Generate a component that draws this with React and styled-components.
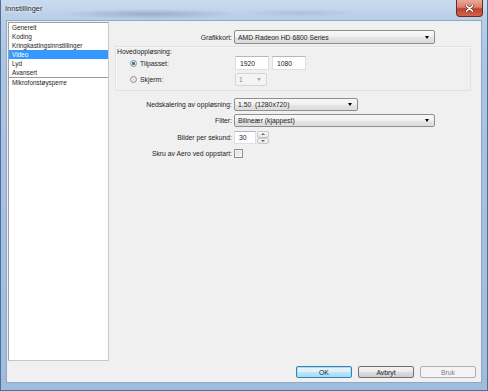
import React from 'react';
import styled, { createGlobalStyle, css } from 'styled-components';

const GlobalStyle = createGlobalStyle`
  html, body { margin: 0; padding: 0; }
  body {
    width: 488px;
    height: 391px;
    overflow: hidden;
    font-family: "Liberation Sans", Arial, sans-serif;
    font-size: 6.8px;
    color: #1e1e1e;
  }
`;

const Window = styled.div`
  width: 488px;
  height: 391px;
  box-sizing: border-box;
  display: flex;
  flex-direction: column;
  padding: 0 5px 7px 5px;
  border: 1px solid #4d6f98;
  border-top: none;
  background:
    radial-gradient(ellipse 90px 5px at 150px 14px, rgba(70, 90, 120, 0.3), transparent),
    radial-gradient(ellipse 60px 4px at 300px 13px, rgba(90, 110, 140, 0.18), transparent),
    linear-gradient(180deg, #c9dbef 0px, #b9cfe8 18px, #abc5e2 60px, #9fbcdd 100%);
`;

const TitleBar = styled.div`
  height: 20px;
  display: flex;
  align-items: flex-start;
  justify-content: space-between;
`;

const Title = styled.span`
  margin: 4px 0 0 -1px;
  font-size: 7.4px;
  color: #1a1a1a;
  text-shadow: 0 0 3px #fff, 0 0 3px #fff;
`;

const CloseButton = styled.div`
  width: 27px;
  height: 17px;
  margin-right: -1px;
  box-sizing: border-box;
  border: 1px solid #6b2a22;
  border-top: none;
  border-radius: 0 0 4px 4px;
  background: linear-gradient(180deg, #e9a99a 0%, #d9826f 45%, #c4402a 55%, #d3634c 100%);
  display: flex;
  align-items: center;
  justify-content: center;
`;

const Client = styled.div`
  flex: 1;
  display: flex;
  flex-direction: column;
  background: #f0f0f0;
  border: 1px solid #8fa8c6;
`;

const Main = styled.div`
  height: 340px;
  display: flex;
`;

const List = styled.div`
  width: 101px;
  margin: 1px 0 0 1px;
  box-sizing: border-box;
  background: #fff;
  border: 1px solid #a0a0a0;
  border-right-color: #c8c8c8;
  border-bottom-color: #c8c8c8;
  font-size: 6.4px;
`;

const ListItem = styled.div`
  height: 9px;
  line-height: 9px;
  padding-left: 3px;
  white-space: nowrap;
  ${({ selected }) => selected && css`
    background: #3399ff;
    color: #fff;
  `}
`;

const ListDivider = styled.div`
  height: 1px;
  background: #9a9a9a;
`;

const Panel = styled.div`
  flex: 1;
  display: flex;
  flex-direction: column;
  padding: 9px 10px 0 6px;
`;

const FormRow = styled.div`
  display: grid;
  grid-template-columns: 117px auto;
  column-gap: 2px;
  align-items: center;
  height: ${({ h }) => h || 13}px;
  margin-top: ${({ mt }) => mt || 0}px;
  justify-items: start;
`;

const Label = styled.span`
  justify-self: end;
  white-space: nowrap;
`;

const Combo = styled.div`
  width: ${({ w }) => w}px;
  height: ${({ h }) => h || 13}px;
  box-sizing: border-box;
  display: flex;
  align-items: center;
  padding: 0 5px 0 3px;
  border: 1px solid ${({ disabled }) => (disabled ? '#d5d5d5' : '#8e8e8e')};
  border-radius: 2px;
  color: ${({ disabled }) => (disabled ? '#8a8a8a' : '#1e1e1e')};
  background: ${({ disabled }) =>
    disabled
      ? '#f4f4f4'
      : 'linear-gradient(180deg, #f8f8f8 0%, #f0f0f0 50%, #e5e5e5 51%, #dcdcdc 100%)'};
`;

const ComboText = styled.span`
  flex: 1;
  white-space: pre;
`;

const Arrow = styled.span`
  width: 0;
  height: 0;
  border-left: 2.5px solid transparent;
  border-right: 2.5px solid transparent;
  border-top: 3px solid ${({ disabled }) => (disabled ? '#a8a8a8' : '#000')};
`;

const TextBox = styled.div`
  width: ${({ w }) => w}px;
  height: ${({ h }) => h || 14}px;
  box-sizing: border-box;
  background: #fff;
  border: 1px solid #dcdfe5;
  border-top-color: #b5b7bd;
  display: flex;
  align-items: center;
  padding-left: 4px;
`;

const GroupBox = styled.div`
  margin-top: 2px;
  height: 45px;
  box-sizing: border-box;
  border: 1px solid #e2e2e2;
  box-shadow: inset 1px 1px 0 #f8f8f8;
  display: flex;
  flex-direction: column;
`;

const GroupTitle = styled.div`
  height: 8px;
  line-height: 8px;
  padding-left: 1px;
  margin-top: 1px;
`;

const GroupRow = styled.div`
  display: grid;
  grid-template-columns: 105px auto;
  align-items: center;
  justify-items: start;
  padding-left: 14px;
  height: ${({ h }) => h}px;
  margin-top: ${({ mt }) => mt}px;
`;

const RadioLabel = styled.label`
  display: flex;
  align-items: center;
  gap: 3px;
`;

const Radio = styled.span`
  width: 7px;
  height: 7px;
  box-sizing: border-box;
  border-radius: 50%;
  border: 1px solid #8e8f8f;
  background: ${({ checked }) =>
    checked
      ? 'radial-gradient(circle, #2a5e8a 0%, #4b9ad6 45%, #e6e6e6 55%, #f4f4f4 100%)'
      : 'radial-gradient(circle, #dcdcdc 0%, #f6f6f6 100%)'};
`;

const Pair = styled.div`
  display: flex;
  gap: 3px;
`;

const Spin = styled.div`
  display: flex;
  height: 13px;
`;

const SpinButtons = styled.div`
  width: 12px;
  margin-left: 1px;
  display: flex;
  flex-direction: column;
`;

const SpinHalf = styled.div`
  flex: 1;
  box-sizing: border-box;
  border: 1px solid #c9c9c9;
  border-radius: 2px;
  background: linear-gradient(180deg, #f7f7f7, #e6e6e6);
  display: flex;
  align-items: center;
  justify-content: center;
`;

const TinyArrow = styled.span`
  width: 0;
  height: 0;
  border-left: 2px solid transparent;
  border-right: 2px solid transparent;
  ${({ up }) => (up ? 'border-bottom: 2px solid #6a6a6a;' : 'border-top: 2px solid #6a6a6a;')}
`;

const CheckBox = styled.span`
  width: 9px;
  height: 9px;
  box-sizing: border-box;
  border: 1px solid #8f8f8f;
  background: linear-gradient(135deg, #dcdcdc, #f8f8f8);
  box-shadow: inset 0 0 0 1px #f4f4f4;
`;

const Footer = styled.div`
  flex: 1;
  display: flex;
  justify-content: flex-end;
  align-items: flex-start;
  gap: 6px;
  padding: 5px 5px 0 0;
`;

const Button = styled.div`
  width: 56px;
  height: 12px;
  box-sizing: border-box;
  border-radius: 2px;
  display: flex;
  align-items: center;
  justify-content: center;
  border: 1px solid #707070;
  background: linear-gradient(180deg, #f2f2f2 0%, #ebebeb 50%, #dddddd 51%, #cfcfcf 100%);
  ${({ primary }) => primary && css`
    border-color: #3c7fb1;
    box-shadow: inset 0 0 0 1px #a8dcf7;
    background: linear-gradient(180deg, #eaf6fd 0%, #d9f0fc 50%, #bee6fd 51%, #a7d9f5 100%);
  `}
  ${({ disabled }) => disabled && css`
    border-color: #adb2b5;
    background: #f4f4f4;
    color: #838383;
  `}
`;

const menu = ['Generelt', 'Koding', 'Kringkastingsinnstillinger', 'Video', 'Lyd', 'Avansert'];

export default function App() {
  return (
    <>
      <GlobalStyle />
      <Window>
        <TitleBar>
          <Title>Innstillinger</Title>
          <CloseButton>
            <svg width="9" height="7" viewBox="0 0 9 7">
              <path d="M1.5 0.8 L7.5 6.2 M7.5 0.8 L1.5 6.2" stroke="#3a1410" strokeWidth="2.6" strokeLinecap="round" />
              <path d="M1.5 0.8 L7.5 6.2 M7.5 0.8 L1.5 6.2" stroke="#fff" strokeWidth="1.6" strokeLinecap="round" />
            </svg>
          </CloseButton>
        </TitleBar>
        <Client>
          <Main>
            <List>
              {menu.map((m) => (
                <ListItem key={m} selected={m === 'Video'}>{m}</ListItem>
              ))}
              <ListDivider />
              <ListItem>Mikrofonstøysperre</ListItem>
            </List>
            <Panel>
              <FormRow h={14}>
                <Label>Grafikkort:</Label>
                <Combo w={201} h={14}>
                  <ComboText>AMD Radeon HD 6800 Series</ComboText>
                  <Arrow />
                </Combo>
              </FormRow>

              <GroupBox>
                <GroupTitle>Hovedoppløsning:</GroupTitle>
                <GroupRow h={14} mt={0}>
                  <RadioLabel>
                    <Radio checked />
                    Tilpasset:
                  </RadioLabel>
                  <Pair>
                    <TextBox w={34}>1920</TextBox>
                    <TextBox w={34}>1080</TextBox>
                  </Pair>
                </GroupRow>
                <GroupRow h={13} mt={3}>
                  <RadioLabel>
                    <Radio />
                    Skjerm:
                  </RadioLabel>
                  <Combo w={32} disabled>
                    <ComboText>1</ComboText>
                    <Arrow disabled />
                  </Combo>
                </GroupRow>
              </GroupBox>

              <FormRow mt={7}>
                <Label>Nedskalering av oppløsning:</Label>
                <Combo w={124}>
                  <ComboText>1.50  (1280x720)</ComboText>
                  <Arrow />
                </Combo>
              </FormRow>

              <FormRow mt={3}>
                <Label>Filter:</Label>
                <Combo w={201}>
                  <ComboText>Bilineær (kjappest)</ComboText>
                  <Arrow />
                </Combo>
              </FormRow>

              <FormRow mt={4}>
                <Label>Bilder per sekund:</Label>
                <Spin>
                  <TextBox w={22} h={13}>30</TextBox>
                  <SpinButtons>
                    <SpinHalf><TinyArrow up /></SpinHalf>
                    <SpinHalf><TinyArrow /></SpinHalf>
                  </SpinButtons>
                </Spin>
              </FormRow>

              <FormRow mt={4} h={11}>
                <Label>Skru av Aero ved oppstart:</Label>
                <CheckBox />
              </FormRow>
            </Panel>
          </Main>
          <Footer>
            <Button primary>OK</Button>
            <Button>Avbryt</Button>
            <Button disabled>Bruk</Button>
          </Footer>
        </Client>
      </Window>
    </>
  );
}
